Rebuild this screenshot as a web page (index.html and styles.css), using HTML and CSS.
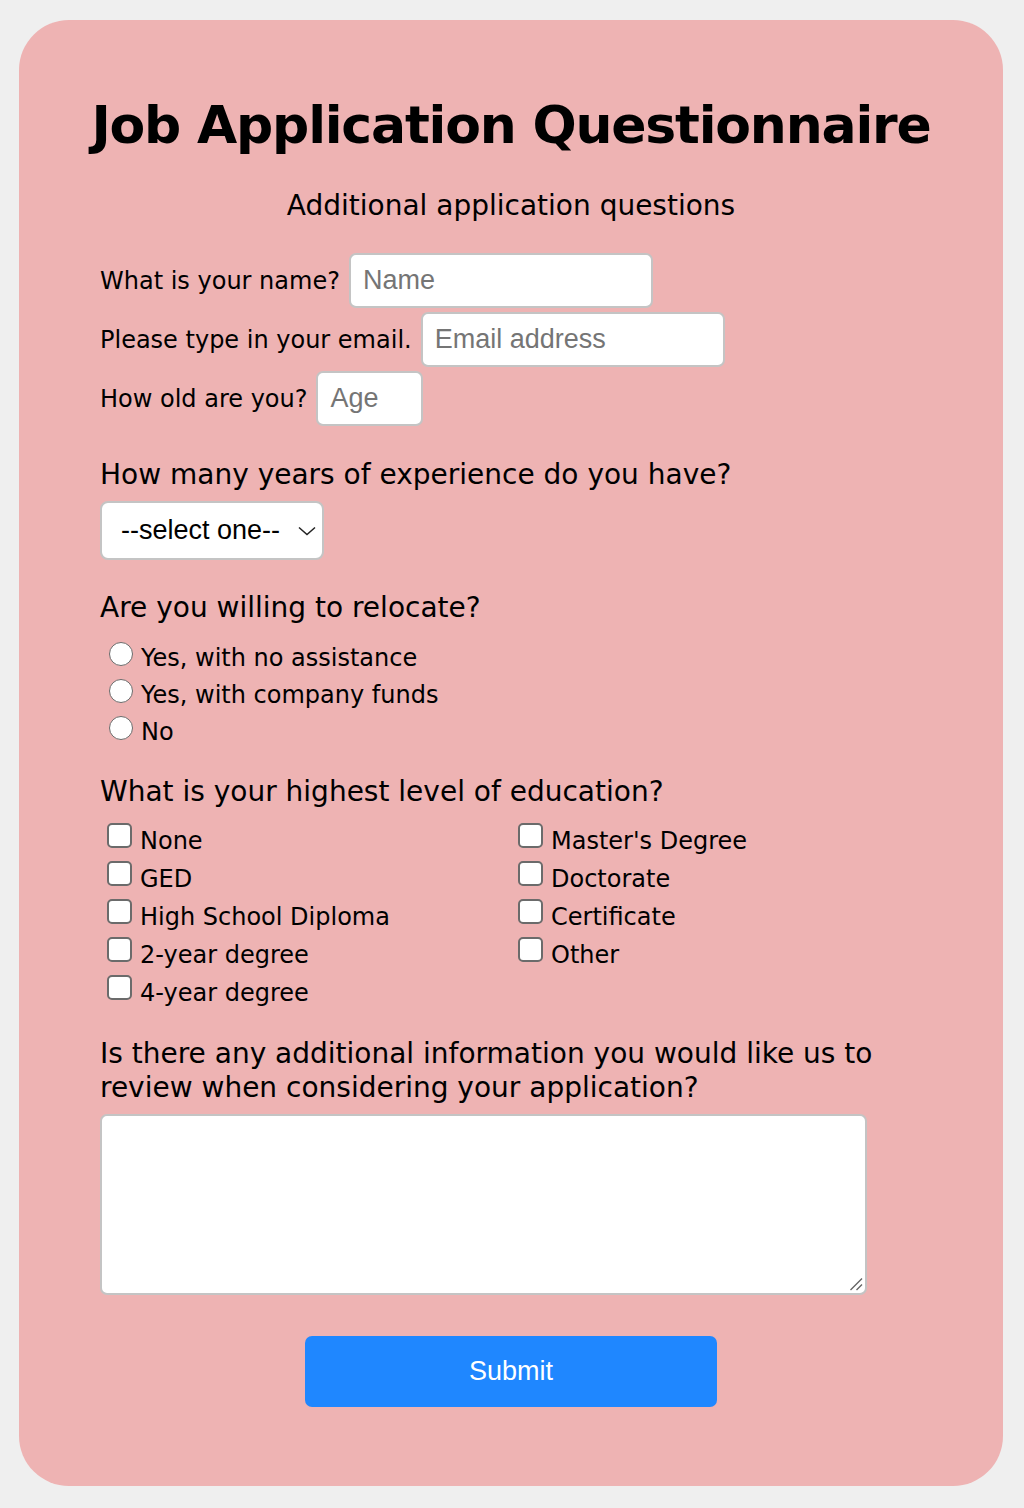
FILE: index.html
```html
<!DOCTYPE html>
<html lang="en">
<head>
<meta charset="utf-8">
<title>Job Application Questionnaire</title>
<link rel="stylesheet" href="styles.css">
</head>
<body>
<main class="card">
  <h1 class="title">Job Application Questionnaire</h1>
  <p class="subtitle">Additional application questions</p>
  <form class="form">
    <div class="field-row">
      <label for="name">What is your name?</label>
      <input class="text-input w-name" id="name" type="text" placeholder="Name">
    </div>
    <div class="field-row">
      <label for="email">Please type in your email.</label>
      <input class="text-input w-name" id="email" type="email" placeholder="Email address">
    </div>
    <div class="field-row">
      <label for="age">How old are you?</label>
      <input class="text-input w-age" id="age" type="text" placeholder="Age">
    </div>

    <p class="question q-exp">How many years of experience do you have?</p>
    <div class="select-box">
      <span>--select one--</span>
      <svg class="chev" width="18" height="10" viewBox="0 0 18 10"><path d="M1 1.5 L9 8.5 L17 1.5" fill="none" stroke="#222" stroke-width="1.5"/></svg>
    </div>

    <p class="question q-reloc">Are you willing to relocate?</p>
    <div class="radio-list">
      <label class="opt"><span class="radio"></span>Yes, with no assistance</label>
      <label class="opt"><span class="radio"></span>Yes, with company funds</label>
      <label class="opt"><span class="radio"></span>No</label>
    </div>

    <p class="question q-edu">What is your highest level of education?</p>
    <div class="check-grid">
      <div class="check-col">
        <label class="copt"><span class="box"></span>None</label>
        <label class="copt"><span class="box"></span>GED</label>
        <label class="copt"><span class="box"></span>High School Diploma</label>
        <label class="copt"><span class="box"></span>2-year degree</label>
        <label class="copt"><span class="box"></span>4-year degree</label>
      </div>
      <div class="check-col">
        <label class="copt"><span class="box"></span>Master's Degree</label>
        <label class="copt"><span class="box"></span>Doctorate</label>
        <label class="copt"><span class="box"></span>Certificate</label>
        <label class="copt"><span class="box"></span>Other</label>
      </div>
    </div>

    <p class="question q-info">Is there any additional information you would like us to review when considering your application?</p>
    <div class="textarea-box">
      <svg class="grip" width="14" height="14" viewBox="0 0 14 14"><path d="M1.5 13 L13 1.5 M7.5 13 L13 7.5" stroke="#666" stroke-width="1.4"/></svg>
    </div>

    <div class="submit-wrap">
      <button class="submit" type="button">Submit</button>
    </div>
  </form>
</main>
</body>
</html>
```
FILE: styles.css
```css
* { box-sizing: border-box; }
html, body { margin: 0; }
body {
  background: #efefef;
  padding: 20px 21px 22px 19px;
  font-family: "DejaVu Sans", Verdana, sans-serif;
  color: #000;
}
.card {
  background: #eeb3b3;
  border-radius: 50px;
  padding: 75px 81px 79px 81px;
}
.title {
  margin: 0 -30px;
  text-align: center;
  font-size: 52px;
  letter-spacing: -1.2px;
  font-weight: bold;
  line-height: 60px;
  white-space: nowrap;
}
.subtitle {
  margin: 34px 0 0;
  text-align: center;
  font-size: 28px;
  line-height: 34px;
}
.form { display: flex; flex-direction: column; margin-top: 30px; }
.field-row {
  display: flex;
  align-items: center;
  gap: 9px;
  height: 55px;
  margin-bottom: 4px;
  font-size: 24px;
}
.field-row:last-child { margin-bottom: 0; }
.text-input {
  height: 55px;
  border: 2px solid #c4c4c4;
  border-radius: 7px;
  background: #fff;
  padding: 0 12px;
  font-family: "Liberation Sans", Arial, sans-serif;
  font-size: 27px;
  color: #000;
}
.text-input::placeholder { color: #757575; }
.w-name { width: 304px; }
.w-age { width: 107px; }
.question {
  margin: 0;
  font-size: 28px;
  line-height: 34px;
}
.q-exp { margin-top: 28px; }
.select-box {
  margin-top: 9px;
  width: 224px;
  height: 59px;
  background: #fff;
  border: 2px solid #c4c4c4;
  border-radius: 8px;
  display: flex;
  align-items: center;
  justify-content: space-between;
  padding: 0 6px 0 19px;
  font-family: "Liberation Sans", Arial, sans-serif;
  font-size: 27px;
}
.q-reloc { margin-top: 31px; }
.radio-list { display: flex; flex-direction: column; margin-top: 14px; font-size: 24px; }
.opt {
  display: flex;
  align-items: center;
  height: 37px;
}
.radio {
  width: 24px; height: 24px;
  border: 1.5px solid #6b6b6b;
  border-radius: 50%;
  background: #fff;
  margin: 0 8px 8px 9px;
}
.q-edu { margin-top: 25px; }
.check-grid {
  display: grid;
  grid-template-columns: 1fr 1fr;
  margin-top: 13px;
  font-size: 24px;
}
.check-col { display: flex; flex-direction: column; }
.copt { display: flex; align-items: center; height: 38px; }
.box {
  width: 25px; height: 25px;
  border: 2px solid #6b6b6b;
  border-radius: 5px;
  background: #fff;
  margin: 0 8px 11px 7px;
}
.q-info { margin-top: 25px; }
.textarea-box {
  margin-top: 9px;
  width: 767px;
  height: 181px;
  background: #fff;
  border: 2px solid #c4c4c4;
  border-radius: 7px;
  position: relative;
}
.grip { position: absolute; right: 2px; bottom: 2px; }
.submit-wrap { display: flex; justify-content: center; margin-top: 41px; }
.submit {
  width: 412px;
  height: 71px;
  border: none;
  border-radius: 7px;
  background: #1f87ff;
  color: #fff;
  font-family: "Liberation Sans", Arial, sans-serif;
  font-size: 27px;
}
```
